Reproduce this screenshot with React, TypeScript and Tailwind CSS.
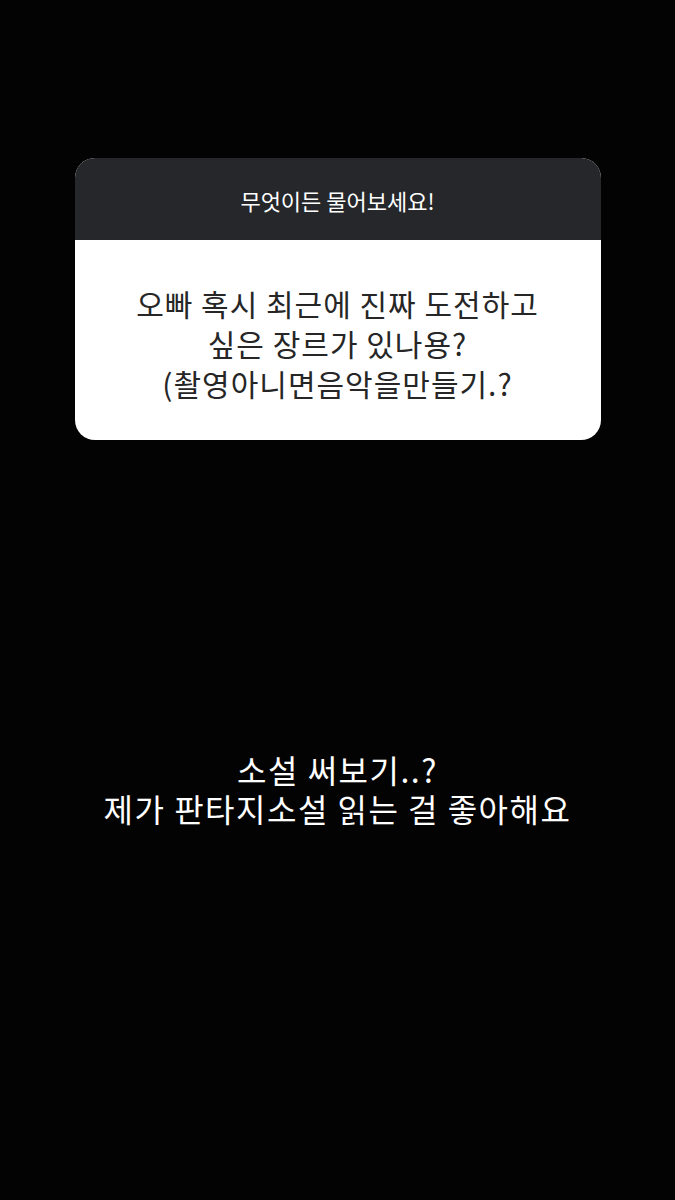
export default function App() {
  return (
    <div
      className="w-[675px] h-[1200px] bg-[#030303] flex flex-col items-center"
      style={{ fontFamily: '"Noto Sans CJK KR", "Noto Sans", sans-serif' }}
    >
      <div className="mt-[158px] w-[526px] rounded-[20px] overflow-hidden bg-white">
        <div className="h-[82px] bg-[#25272b] flex items-center justify-center text-white text-[22px] leading-none pt-[1px]">
          무엇이든 물어보세요!
        </div>
        <div className="h-[200px] flex items-center justify-center text-center text-[#262626] text-[30px] tracking-[1px] leading-[40px] pt-[6px]">
          <div>
            오빠 혹시 최근에 진짜 도전하고
            <br />
            싶은 장르가 있나용?
            <br />
            (촬영아니면음악을만들기.?
          </div>
        </div>
      </div>
      <div className="mt-[310px] flex flex-col items-center text-white text-[32px] tracking-[1.5px] leading-[39px]">
        <div>소설 써보기..?</div>
        <div>제가 판타지소설 읽는 걸 좋아해요</div>
      </div>
    </div>
  );
}
